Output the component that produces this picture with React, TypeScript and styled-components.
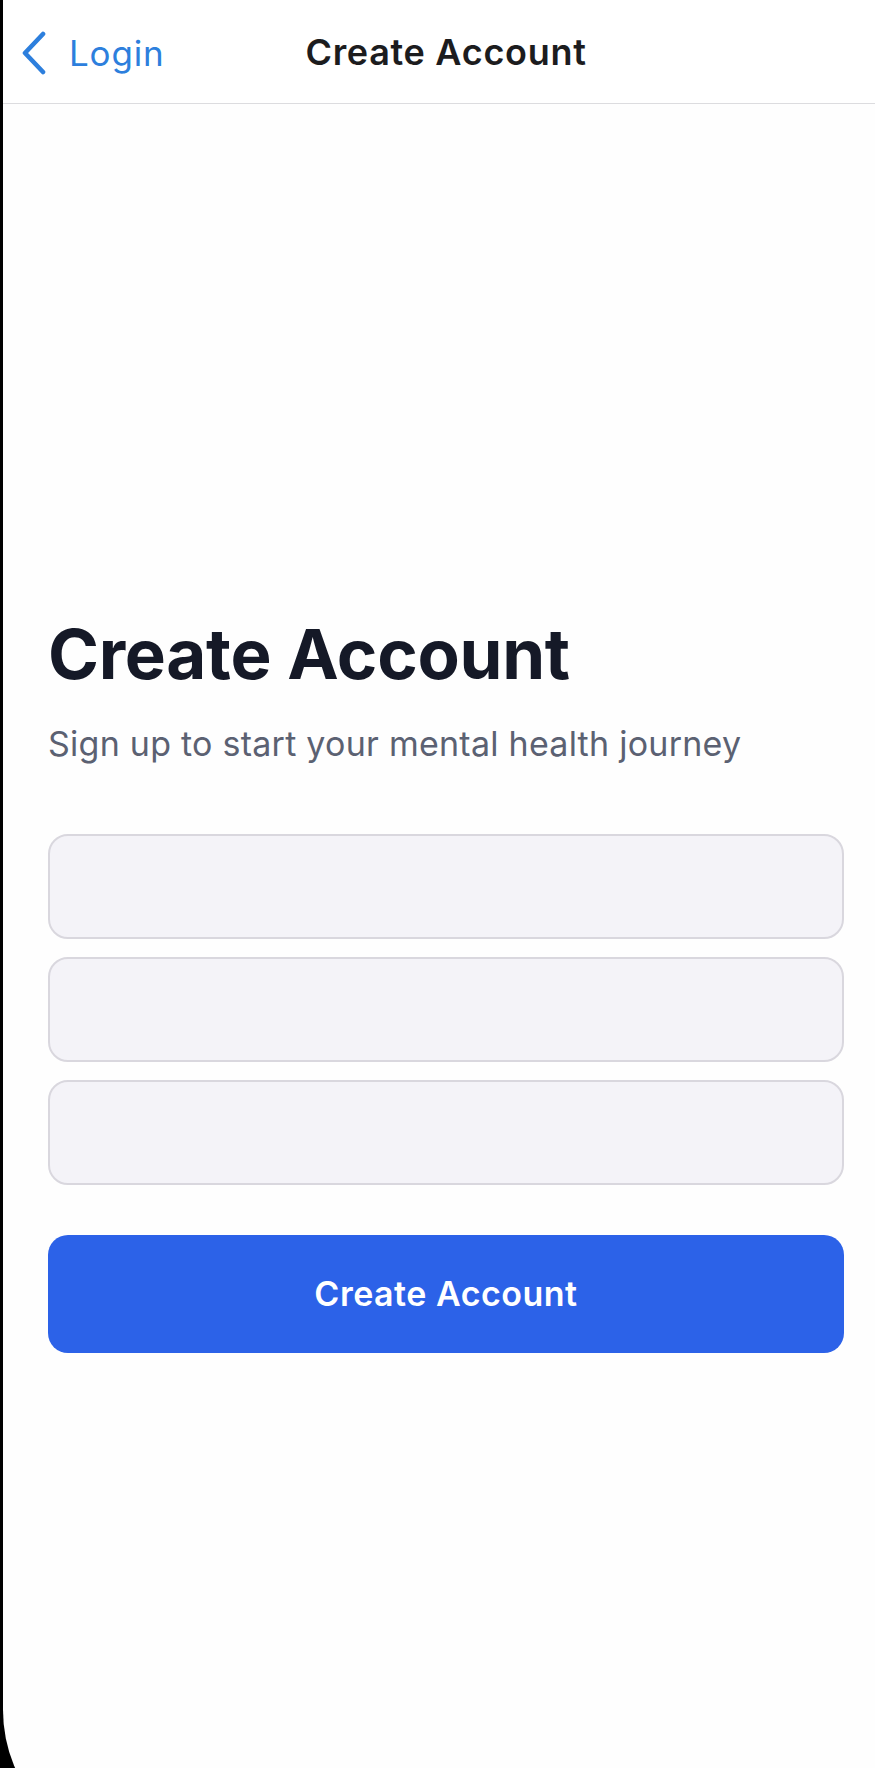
import React from "react";
import styled, { createGlobalStyle } from "styled-components";

const GlobalStyle = createGlobalStyle`
  html, body {
    margin: 0;
    padding: 0;
    background: #000;
    overflow: hidden;
  }
  body {
    font-family: Inter, "Noto Sans", "Liberation Sans", sans-serif;
    -webkit-font-smoothing: antialiased;
  }
  * { box-sizing: border-box; }
`;

const Screen = styled.div`
  margin-left: 3px;
  width: 886px;
  min-height: 1856px;
  background: #fefefe;
  border-bottom-left-radius: 146px;
  display: flex;
  flex-direction: column;
`;

const NavBar = styled.header`
  height: 104px;
  background: #ffffff;
  border-bottom: 1px solid #dcdcdf;
  display: grid;
  grid-template-columns: 1fr auto 1fr;
  align-items: center;
`;

const BackButton = styled.button`
  display: flex;
  align-items: center;
  gap: 22px;
  background: none;
  border: none;
  padding: 0 0 0 18px;
  color: #2d7fdd;
  font-family: Inter, "Noto Sans", sans-serif;
  font-size: 35px;
  font-weight: 400;
  letter-spacing: 0.8px;
  justify-self: start;
  margin-top: 2px;
`;

const NavTitle = styled.h1`
  margin: 0;
  font-size: 36px;
  font-weight: 600;
  color: #1c1c1e;
  letter-spacing: 0.7px;
`;

const Content = styled.main`
  display: flex;
  flex-direction: column;
  padding: 509px 45px 0 45px;
`;

const Heading = styled.h2`
  margin: 0;
  font-size: 69px;
  line-height: 1.2;
  font-weight: 700;
  color: #151927;
  letter-spacing: -0.3px;
`;

const Subtitle = styled.p`
  margin: 28px 0 0 0;
  font-size: 34px;
  line-height: 1.2;
  font-weight: 400;
  color: #5b6172;
  letter-spacing: 0.25px;
`;

const Form = styled.form`
  display: flex;
  flex-direction: column;
  gap: 18px;
  margin-top: 69px;
`;

const Field = styled.input`
  height: 105px;
  width: 100%;
  border: 2px solid #d9d7de;
  border-radius: 20px;
  background: #f4f3f8;
  font-family: Inter, sans-serif;
  font-size: 34px;
  padding: 0 30px;
  outline: none;
`;

const SubmitButton = styled.button`
  margin-top: 32px;
  height: 118px;
  width: 100%;
  border: none;
  border-radius: 20px;
  background: #2c62e8;
  color: #ffffff;
  font-family: Inter, sans-serif;
  font-size: 34px;
  font-weight: 600;
  letter-spacing: 0.5px;
`;

const Chevron = () => (
  <svg width="26" height="44" viewBox="0 0 26 44" fill="none">
    <polyline
      points="22,3 4,22 22,41"
      stroke="#2d7fdd"
      strokeWidth="4.6"
      strokeLinecap="round"
      strokeLinejoin="round"
    />
  </svg>
);

export default function App() {
  return (
    <>
      <GlobalStyle />
      <Screen>
        <NavBar>
          <BackButton type="button">
            <Chevron />
            Login
          </BackButton>
          <NavTitle>Create Account</NavTitle>
          <div />
        </NavBar>
        <Content>
          <Heading>Create Account</Heading>
          <Subtitle>Sign up to start your mental health journey</Subtitle>
          <Form onSubmit={(e) => e.preventDefault()}>
            <Field type="text" aria-label="Name" />
            <Field type="email" aria-label="Email" />
            <Field type="password" aria-label="Password" />
            <SubmitButton type="submit">Create Account</SubmitButton>
          </Form>
        </Content>
      </Screen>
    </>
  );
}
